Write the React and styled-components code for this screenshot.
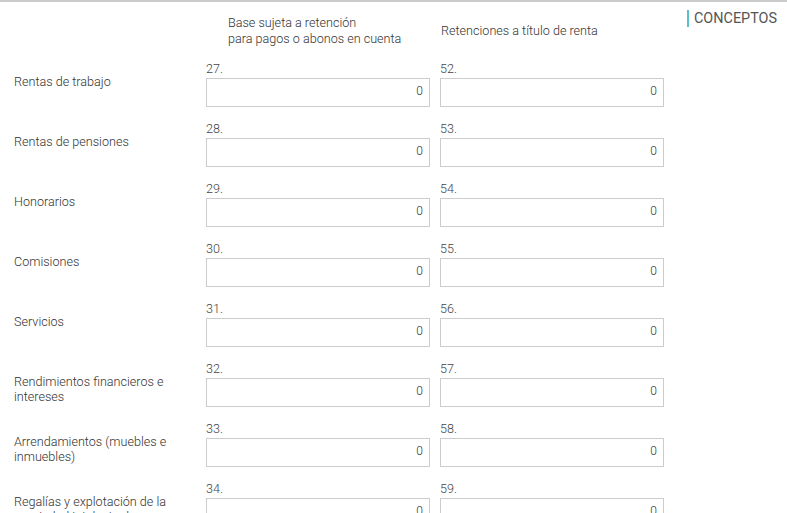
import React from 'react'
import styled, { createGlobalStyle } from 'styled-components'

const GlobalStyle = createGlobalStyle`
  html, body {
    margin: 0;
    background: #fff;
    font-family: Roboto, "Liberation Sans", sans-serif;
  }
`

const Page = styled.div`
  display: flex;
  align-items: flex-start;
  border-top: 2px solid #cccccc;
`

const Form = styled.div`
  display: grid;
  grid-template-columns: 182px 224px 224px;
  column-gap: 10px;
  padding-left: 14px;
  flex: none;
`

const HeadCell = styled.div`
  grid-column: ${({ col }) => col};
  display: flex;
  align-items: center;
  height: 32px;
  margin: 13px 0 15px;
  padding-left: ${({ indent }) => indent}px;
  font-size: 12.6px;
  font-weight: 300;
  line-height: 16px;
  color: #333;
`

const Label = styled.div`
  grid-column: 1;
  padding: 12px 8px 0 0;
  font-size: 12.6px;
  font-weight: 300;
  line-height: 15px;
  color: #333;
`

const Field = styled.div`
  display: flex;
  flex-direction: column;
  margin-bottom: 15px;
`

const Num = styled.span`
  font-size: 12.6px;
  font-weight: 300;
  line-height: 14px;
  margin-bottom: 2px;
  color: #444;
`

const Box = styled.div`
  box-sizing: border-box;
  height: 29px;
  border: 1px solid #cccccc;
  display: flex;
  align-items: center;
  justify-content: flex-end;
  padding: 0 6px 3px 0;
  font-size: 12px;
  font-weight: 300;
  color: #333;
`

const Aside = styled.div`
  margin: 8px 0 0 23px;
  padding-left: 5px;
  border-left: 2px solid #5bbfc8;
  font-size: 14.4px;
  line-height: 17px;
  color: #555;
`

const rows = [
  ['Rentas de trabajo', 27, 52],
  ['Rentas de pensiones', 28, 53],
  ['Honorarios', 29, 54],
  ['Comisiones', 30, 55],
  ['Servicios', 31, 56],
  ['Rendimientos financieros e intereses', 32, 57],
  ['Arrendamientos (muebles e inmuebles)', 33, 58],
  ['Regalías y explotación de la propiedad intelectual', 34, 59],
]

const App = () => {
  return (
    <>
      <GlobalStyle />
      <Page>
        <Form>
          <HeadCell col={2} indent={22}>
            Base sujeta a retención<br />para pagos o abonos en cuenta
          </HeadCell>
          <HeadCell col={3} indent={1}>Retenciones a título de renta</HeadCell>
          {rows.map(([label, a, b]) => (
            <React.Fragment key={a}>
              <Label>{label}</Label>
              <Field>
                <Num>{a}.</Num>
                <Box>0</Box>
              </Field>
              <Field>
                <Num>{b}.</Num>
                <Box>0</Box>
              </Field>
            </React.Fragment>
          ))}
        </Form>
        <Aside>CONCEPTOS</Aside>
      </Page>
    </>
  )
}

export default App
